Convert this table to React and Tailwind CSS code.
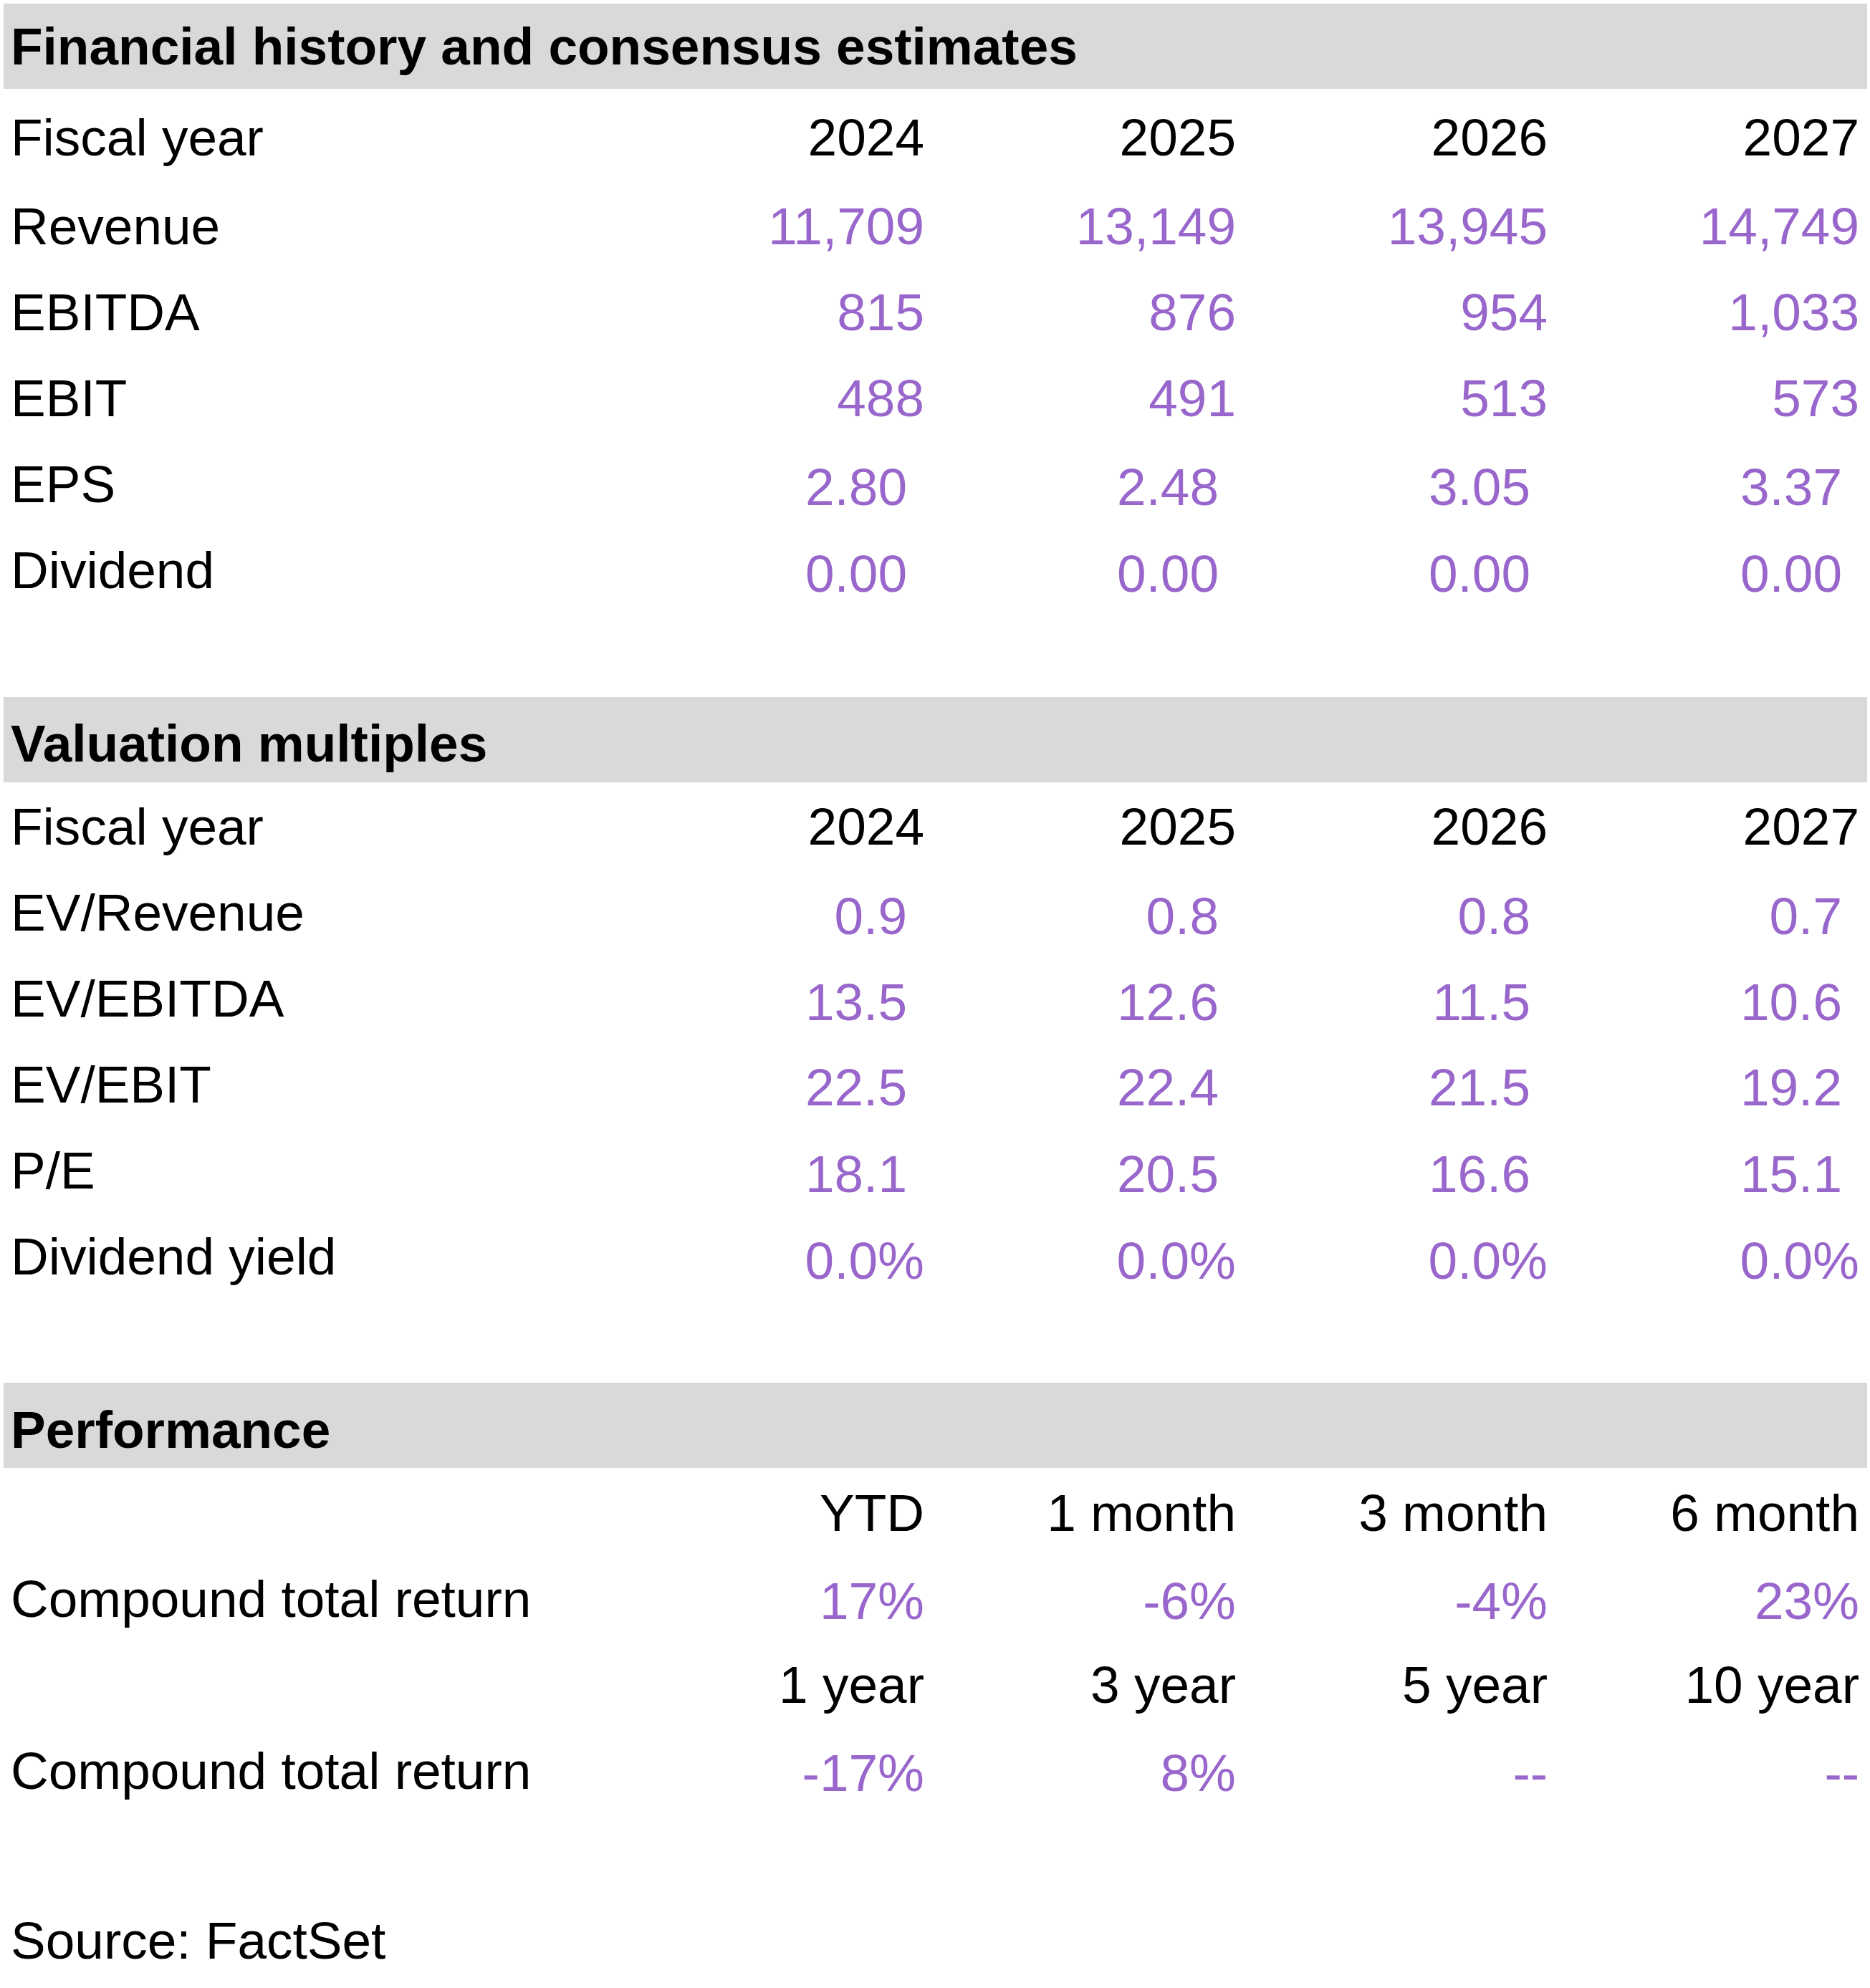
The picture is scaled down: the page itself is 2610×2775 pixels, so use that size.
import React from 'react';

const purple = 'text-[#9966cc]';

const financials = [
  { label: 'Revenue', values: ['11,709', '13,149', '13,945', '14,749'] },
  { label: 'EBITDA', values: ['815', '876', '954', '1,033'] },
  { label: 'EBIT', values: ['488', '491', '513', '573'] },
  { label: 'EPS', values: ['2.80', '2.48', '3.05', '3.37'], pad: true, drop: 'pt-[4px]' },
  { label: 'Dividend', values: ['0.00', '0.00', '0.00', '0.00'], pad: true, drop: 'pt-[5px]' },
];

const multiples = [
  { label: 'EV/Revenue', values: ['0.9', '0.8', '0.8', '0.7'], pad: true, drop: 'pt-[5px]' },
  { label: 'EV/EBITDA', values: ['13.5', '12.6', '11.5', '10.6'], pad: true, drop: 'pt-[5px]' },
  { label: 'EV/EBIT', values: ['22.5', '22.4', '21.5', '19.2'], pad: true, drop: 'pt-[4px]' },
  { label: 'P/E', values: ['18.1', '20.5', '16.6', '15.1'], pad: true, drop: 'pt-[5px]' },
  { label: 'Dividend yield', values: ['0.0%', '0.0%', '0.0%', '0.0%'], drop: 'pt-[6px]' },
];

const years = ['2024', '2025', '2026', '2027'];

// one spreadsheet row: label column + four right-aligned value columns
const Row = ({ label, values, pad, head, drop = '', className = '' }) => (
  <div
    className={`grid grid-cols-[850px_435px_435px_435px_435px] h-[120px] leading-[120px] whitespace-nowrap ${className}`}
  >
    <div className="pl-[10px]">{label}</div>
    {values.map((v, i) => (
      <div
        key={i}
        className={`text-right ${pad ? 'pr-[24px]' : ''} ${drop} ${head ? 'text-black' : purple}`}
      >
        {v}
      </div>
    ))}
  </div>
);

const Band = ({ title, className = '' }) => (
  <div
    className={`h-[119px] bg-[#d9d9d9] pl-[10px] font-bold leading-[119px] whitespace-nowrap ${className}`}
  >
    {title}
  </div>
);

export default function App() {
  return (
    <div className="w-[2610px] h-[2775px] bg-white text-black font-['Liberation_Sans',Arial,sans-serif] text-[73px] overflow-hidden">
      <div className="ml-[5px] w-[2601px] pt-[5px]">
        {/* Financial history */}
        <Band title="Financial history and consensus estimates" />
        <Row label="Fiscal year" values={years} head className="mt-[8px]" />
        {financials.map((r, i) => (
          <Row key={r.label} {...r} className={i === 0 ? 'mt-[4px]' : ''} />
        ))}

        {/* Valuation multiples */}
        <Band title="Valuation multiples" className="mt-[117px] pt-[5px]" />
        <Row label="Fiscal year" values={years} head className="mt-[2px]" />
        {multiples.map((r) => (
          <Row key={r.label} {...r} />
        ))}

        {/* Performance */}
        <Band title="Performance" className="mt-[116px] pt-[6px]" />
        <Row label="" values={['YTD', '1 month', '3 month', '6 month']} head className="mt-[3px]" />
        <Row label="Compound total return" values={['17%', '-6%', '-4%', '23%']} drop="pt-[3px]" />
        <Row label="" values={['1 year', '3 year', '5 year', '10 year']} head />
        <Row label="Compound total return" values={['-17%', '8%', '--', '--']} drop="pt-[3px]" />

        <div className="mt-[117px] h-[120px] pl-[10px] leading-[120px] whitespace-nowrap">
          Source: FactSet
        </div>
      </div>
    </div>
  );
}
